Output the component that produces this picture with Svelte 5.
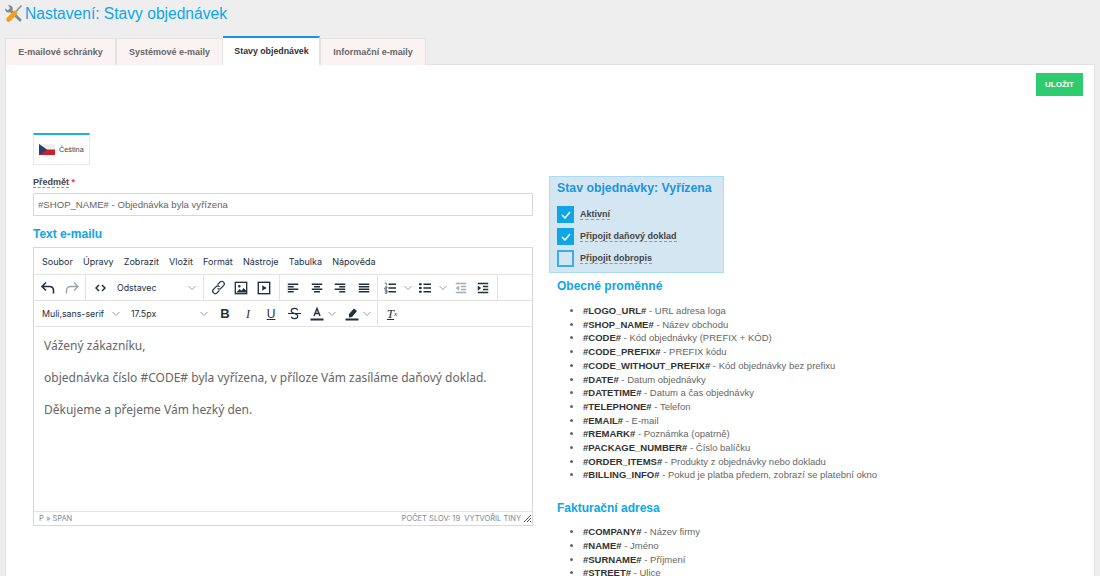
<script>
	const tabs = [
		{ label: 'E-mailové schránky', width: 111 },
		{ label: 'Systémové e-maily', width: 107 },
		{ label: 'Stavy objednávek', width: 97, active: true },
		{ label: 'Informační e-maily', width: 106 }
	];

	const menu = ['Soubor', 'Úpravy', 'Zobrazit', 'Vložit', 'Formát', 'Nástroje', 'Tabulka', 'Nápověda'];

	const general = [
		['#LOGO_URL#', 'URL adresa loga'],
		['#SHOP_NAME#', 'Název obchodu'],
		['#CODE#', 'Kód objednávky (PREFIX + KÓD)'],
		['#CODE_PREFIX#', 'PREFIX kódu'],
		['#CODE_WITHOUT_PREFIX#', 'Kód objednávky bez prefixu'],
		['#DATE#', 'Datum objednávky'],
		['#DATETIME#', 'Datum a čas objednávky'],
		['#TELEPHONE#', 'Telefon'],
		['#EMAIL#', 'E-mail'],
		['#REMARK#', 'Poznámka (opatrně)'],
		['#PACKAGE_NUMBER#', 'Číslo balíčku'],
		['#ORDER_ITEMS#', 'Produkty z objednávky nebo dokladu'],
		['#BILLING_INFO#', 'Pokud je platba předem, zobrazí se platební okno']
	];

	const billing = [
		['#COMPANY#', 'Název firmy'],
		['#NAME#', 'Jméno'],
		['#SURNAME#', 'Příjmení'],
		['#STREET#', 'Ulice']
	];

	const checks = [
		{ label: 'Aktivní', on: true },
		{ label: 'Připojit daňový doklad', on: true },
		{ label: 'Připojit dobropis', on: false }
	];
</script>

{#snippet chevron()}
	<svg class="chev" width="10" height="6" viewBox="0 0 10 6"><path d="M1.500 1l3.500 3.500L8.500 1" fill="none" stroke="#9a9a9a" stroke-width="1" /></svg>
{/snippet}

{#snippet lines(d, color = '#222f3e')}
	<svg class="ico" width="12" height="12" viewBox="0 0 16 16"><path {d} fill="none" stroke={color} stroke-width="1.800" /></svg>
{/snippet}

<div class="page">
	<h1>
		<svg width="20" height="20" viewBox="0 0 20 20">
			<path d="M6 6l10 10" stroke="#7f8c95" stroke-width="3" stroke-linecap="round" />
			<path d="M1.200 4.200l2.300 2 2-.4.500-2.100-2-2.300c2.500-.7 5 1 4.800 3.800L7.500 8 4.800 8.500C2.500 8.800.7 6.800 1.200 4.200z" fill="#7f8c95" />
			<path d="M17.500 1.500L11 8.500" stroke="#8b979f" stroke-width="1.800" />
			<path d="M11 9l-6.500 6.500" stroke="#f59e1c" stroke-width="4.600" stroke-linecap="round" />
		</svg>
		<span>Nastavení: Stavy objednávek</span>
	</h1>

	<nav class="tabs">
		{#each tabs as tab}
			<div class="tab" class:active={tab.active} style="width: {tab.width}px">{tab.label}</div>
		{/each}
	</nav>

	<main class="panel">
		<div class="actions"><button class="save">ULOŽIT</button></div>

		<div class="lang">
			<svg width="16" height="11" viewBox="0 0 16 11">
				<rect width="16" height="5.500" fill="#eee" />
				<rect y="5.500" width="16" height="5.500" fill="#c8202c" />
				<path d="M0 0l8 5.500L0 11z" fill="#23406f" />
			</svg>
			<span>Čeština</span>
		</div>

		<div class="columns">
			<section class="left">
				<label class="field-label" for="subject"><span class="dashed">Předmět</span> <em>*</em></label>
				<input id="subject" class="subject" value="#SHOP_NAME# - Objednávka byla vyřízena" />

				<h3 class="text-title">Text e-mailu</h3>

				<div class="editor">
					<div class="menubar">
						{#each menu as item}<span>{item}</span>{/each}
					</div>

					<div class="toolbar">
						<div class="group history">
							<span class="btn">
								<svg class="ico" width="16" height="16" viewBox="0 0 16 16"><path d="M6 2.500L2 6.500l4 4M2.500 6.500h7c2.500 0 4 1.700 4 4v3" fill="none" stroke="#222f3e" stroke-width="1.600" /></svg>
							</span>
							<span class="btn">
								<svg class="ico" width="16" height="16" viewBox="0 0 16 16"><path d="M10 2.500l4 4-4 4M13.500 6.500h-7c-2.500 0-4 1.700-4 4v3" fill="none" stroke="#9aa1a9" stroke-width="1.300" /></svg>
							</span>
						</div>
						<div class="group format">
							<span class="btn">
								<svg class="ico" width="11" height="8" viewBox="0 0 11 8"><path d="M4 1L1 4l3 3M7 1l3 3-3 3" fill="none" stroke="#222f3e" stroke-width="1.500" /></svg>
							</span>
							<span class="select para">Odstavec {@render chevron()}</span>
						</div>
						<div class="group media">
							<span class="btn">
								<svg class="ico" width="15" height="15" viewBox="0 0 16 16"><path d="M7 5l2.500-2.800c1-1 2.800-1 3.800 0s1.100 2.700.1 3.800L10.500 9c-1 1-2.600 1-3.500 0M9 11l-2.500 2.800c-1 1-2.800 1-3.800 0s-1.100-2.700-.1-3.800L5.500 7c1-1 2.600-1 3.500 0" fill="none" stroke="#222f3e" stroke-width="1.300" /></svg>
							</span>
							<span class="btn">
								<svg class="ico" width="14" height="14" viewBox="0 0 16 16"><rect x="1.500" y="1.500" width="13" height="13" fill="none" stroke="#222f3e" stroke-width="1.500" /><circle cx="6" cy="6" r="1.400" fill="#222f3e" /><path d="M2.500 13l4-4 2 2 2.500-3 3 3v2z" fill="#222f3e" /></svg>
							</span>
							<span class="btn">
								<svg class="ico" width="14" height="14" viewBox="0 0 16 16"><rect x="1.500" y="1.500" width="13" height="13" fill="none" stroke="#222f3e" stroke-width="1.600" /><path d="M6 4.800v6.400L11 8z" fill="#222f3e" /></svg>
							</span>
						</div>
						<div class="group align">
							<span class="btn">{@render lines('M1 3h14M1 6.300h8M1 9.700h14M1 13h8')}</span>
							<span class="btn">{@render lines('M1 3h14M4 6.300h8M1 9.700h14M4 13h8')}</span>
							<span class="btn">{@render lines('M1 3h14M7 6.300h8M1 9.700h14M7 13h8')}</span>
							<span class="btn">{@render lines('M1 3h14M1 6.300h14M1 9.700h14M1 13h14')}</span>
						</div>
						<div class="group lists">
							<span class="split wide">
								<svg class="ico" width="12" height="12" viewBox="0 0 16 16"><path d="M6 3h10M6 8h10M6 13h10" stroke="#222f3e" stroke-width="1.800" /><path d="M1 1.500h2v3M1 6.500h3v1.500H1v1.500h3M1 11h3v4H1M1 13h3" fill="none" stroke="#222f3e" stroke-width=".9" /></svg>
								{@render chevron()}
							</span>
							<span class="split wide">
								<svg class="ico" width="12" height="12" viewBox="0 0 16 16"><path d="M6 3h10M6 8h10M6 13h10" stroke="#222f3e" stroke-width="1.800" /><path d="M0 3h3.500M0 8h3.500M0 13h3.500" stroke="#222f3e" stroke-width="2.400" /></svg>
								{@render chevron()}
							</span>
							<span class="btn">
								<svg class="ico" width="12" height="12" viewBox="0 0 16 16"><path d="M1 2h14M8 6h7M8 10h7M1 14h14" stroke="#a5abb2" stroke-width="1.800" /><path d="M5.500 4.500L1 8l4.500 3.500z" fill="#a5abb2" /></svg>
							</span>
							<span class="btn">
								<svg class="ico" width="12" height="12" viewBox="0 0 16 16"><path d="M1 2h14M8 6h7M8 10h7M1 14h14" stroke="#222f3e" stroke-width="1.800" /><path d="M1 4.500L5.500 8 1 11.500z" fill="#222f3e" /></svg>
							</span>
						</div>
					</div>

					<div class="toolbar">
						<div class="group fonts">
							<span class="select family">Muli,sans-serif {@render chevron()}</span>
							<span class="select size">17.5px {@render chevron()}</span>
						</div>
						<div class="group marks">
							<span class="btn glyph bold">B</span>
							<span class="btn glyph italic">I</span>
							<span class="btn glyph under">U</span>
							<span class="btn">
								<svg class="ico" width="13" height="13" viewBox="0 0 14 14"><path d="M10.500 3.500C10 2 8.500 1.500 7 1.500c-2 0-3.500 1-3.500 2.600 0 1.700 1.500 2.300 3.500 2.900 2 .6 3.500 1.200 3.500 2.900 0 1.600-1.500 2.600-3.500 2.600-1.600 0-3-.6-3.500-2" fill="none" stroke="#222f3e" stroke-width="1.300" /><path d="M0 7h14" stroke="#222f3e" stroke-width="1.200" /></svg>
							</span>
							<span class="split">
								<svg class="ico" width="16" height="16" viewBox="0 0 16 16"><path d="M5 10l3-7.500L11 10M6 7.500h4" fill="none" stroke="#222f3e" stroke-width="1.400" /><rect x="1.500" y="12.500" width="13" height="2" fill="#222f3e" /></svg>
								{@render chevron()}
							</span>
							<span class="split">
								<svg class="ico" width="16" height="16" viewBox="0 0 16 16"><path d="M5 8l5-5.500 3 2.500-5 6-3 .5zM1.500 12.500h13v2h-13z" fill="#222f3e" /></svg>
								{@render chevron()}
							</span>
						</div>
						<div class="group last">
							<span class="btn glyph italic clear"><u>T</u><sub>x</sub></span>
						</div>
					</div>

					<div class="body">
						<p>Vážený zákazníku,</p>
						<p>objednávka číslo #CODE# byla vyřízena, v příloze Vám zasíláme daňový doklad.</p>
						<p>Děkujeme a přejeme Vám hezký den.</p>
					</div>

					<div class="status">
						<span>P » SPAN</span>
						<span class="right">POČET SLOV: 19 &nbsp;VYTVOŘIL TINY</span>
						<svg width="7" height="7" viewBox="0 0 7 7"><path d="M0 7l7-7M3 7l4-4M6 7l1-1" stroke="#555" stroke-width="1" /></svg>
					</div>
				</div>
			</section>

			<section class="right-col">
				<div class="state">
					<h3>Stav objednávky: Vyřízena</h3>
					{#each checks as check}
						<div class="check">
							<span class="box" class:on={check.on}>
								{#if check.on}
									<svg width="10" height="8" viewBox="0 0 10 8"><path d="M1 4l3 3 5-6" fill="none" stroke="#fff" stroke-width="1.500" /></svg>
								{/if}
							</span>
							<span class="dashed">{check.label}</span>
						</div>
					{/each}
				</div>

				<div class="vars">
					<h3>Obecné proměnné</h3>
					<ul>
						{#each general as [key, text]}
							<li><b>{key}</b> - {text}</li>
						{/each}
					</ul>

					<h3 class="second">Fakturační adresa</h3>
					<ul>
						{#each billing as [key, text]}
							<li><b>{key}</b> - {text}</li>
						{/each}
					</ul>
				</div>
			</section>
		</div>
	</main>
</div>

<style>
	:global(body) {
		margin: 0;
		background: #eeeeee;
		overflow: hidden;
	}

	.page {
		height: 576px;
		overflow: hidden;
		font-family: 'Liberation Sans', Arial, sans-serif;
		color: #555;
	}

	h1 {
		display: flex;
		align-items: flex-start;
		gap: 1px;
		margin: 0;
		padding: 4px 0 0 4px;
		height: 37px;
		box-sizing: border-box;
		font-size: 15.600px;
		font-weight: 400;
		line-height: 20px;
		color: #0ea5e9;
	}

	.tabs {
		display: flex;
		margin-left: 5px;
		height: 28px;
		align-items: flex-end;
		position: relative;
		z-index: 1;
	}

	.tab {
		box-sizing: border-box;
		height: 27px;
		background: #fbf3f3;
		border: 1px solid #e2e2e2;
		border-bottom: 0;
		font-size: 9px;
		font-weight: 700;
		line-height: 26px;
		text-align: center;
		color: #666;
	}

	.tab.active {
		height: 29px;
		background: #fff;
		border: 0;
		border-top: 2px solid #1b95e0;
		border-right: 1px solid #e2e2e2;
		padding-left: 1px;
		line-height: 27px;
		font-size: 8.800px;
		color: #333;
	}

	.panel {
		margin: -1px 5px 0 5px;
		border: 1px solid #e2e2e2;
		background: #fff;
		height: 520px;
		padding: 8px 11px 0 27px;
		box-sizing: border-box;
	}

	.actions {
		display: flex;
		justify-content: flex-end;
		height: 23px;
	}

	.save {
		width: 47px;
		height: 23px;
		border: 0;
		padding: 0;
		background: #2ecc71;
		color: #fff;
		font: 700 8px 'Liberation Sans', Arial, sans-serif;
	}

	.lang {
		display: flex;
		align-items: center;
		gap: 4px;
		box-sizing: border-box;
		width: 57px;
		height: 32px;
		margin-top: 37px;
		padding-left: 5px;
		border: 1px solid #e8e8e8;
		border-top: 2px solid #1ab0ec;
		font-size: 7.300px;
		color: #444;
	}

	.columns {
		display: flex;
		gap: 16px;
		margin-top: 11px;
	}

	.left {
		width: 500px;
		flex: none;
	}

	.field-label {
		display: block;
		font-size: 9px;
		font-weight: 700;
		line-height: 13px;
		color: #444;
	}

	.field-label em {
		color: #e33;
		font-style: normal;
	}

	.dashed {
		border-bottom: 1px dashed #33b5f0;
	}

	.subject {
		display: block;
		box-sizing: border-box;
		width: 100%;
		height: 23px;
		margin-top: 4px;
		padding: 0 4px;
		border: 1px solid #d8d8d8;
		outline: 0;
		font: 9.600px 'Liberation Sans', Arial, sans-serif;
		color: #666;
	}

	.text-title {
		margin: 11px 0 5px;
		font-size: 12px;
		line-height: 15px;
		font-weight: 700;
		color: #0ea5e9;
	}

	.editor {
		box-sizing: border-box;
		height: 279px;
		border: 1px solid #d8d8d8;
		display: flex;
		flex-direction: column;
		font-family: Inter, 'Liberation Sans', sans-serif;
		color: #222f3e;
	}

	.menubar {
		display: flex;
		gap: 10.200px;
		align-items: center;
		height: 27px;
		flex: none;
		padding-left: 8px;
		font-size: 9px;
		border-bottom: 1px solid #e3e3e3;
		box-sizing: border-box;
	}

	.toolbar {
		display: flex;
		height: 26px;
		flex: none;
		border-bottom: 1px solid #e3e3e3;
		box-sizing: border-box;
	}

	.group {
		display: flex;
		align-items: center;
		gap: 7.500px;
		padding: 0 6px;
		border-right: 1px solid #e3e3e3;
		box-sizing: border-box;
	}

	.history {
		width: 52px;
	}

	.format {
		width: 118px;
		gap: 9px;
	}

	.media {
		width: 76px;
		gap: 7px;
	}

	.align {
		width: 98px;
		padding-left: 5px;
	}

	.lists {
		width: 120px;
		gap: 5.500px;
	}

	.fonts {
		border-right: 0;
		width: 178px;
		padding: 0 3px 0 8px;
		gap: 10px;
	}

	.marks {
		width: 166px;
		gap: 7px;
		padding-left: 5px;
		padding-right: 0;
	}

	.last {
		border-right: 0;
	}

	.btn {
		display: flex;
		align-items: center;
		justify-content: center;
		width: 16px;
		flex: none;
	}

	.split {
		display: flex;
		align-items: center;
		gap: 2px;
		flex: none;
	}

	.split.wide {
		gap: 7px;
	}

	.select {
		display: flex;
		align-items: center;
		justify-content: space-between;
		font-size: 8.800px;
		flex: 1;
	}

	.family {
		flex: none;
		width: 79px;
	}

	.glyph {
		font-size: 12px;
		line-height: 16px;
		font-family: 'Liberation Sans', sans-serif;
		color: #222f3e;
	}

	.bold {
		font-weight: 700;
		font-size: 13px;
	}

	.italic {
		font-style: italic;
		font-family: 'Liberation Serif', serif;
	}

	.under {
		text-decoration: underline;
	}

	.clear {
		font-size: 13px;
	}

	.clear sub {
		font-size: 7px;
		line-height: 0;
	}

	.body {
		flex: 1;
		padding: 11px 10px 0;
		font-family: 'Noto Sans', 'Liberation Sans', sans-serif;
		font-size: 12px;
		line-height: 16px;
		color: #666;
	}

	.body p {
		margin: 0 0 16px;
	}

	.status {
		display: flex;
		align-items: center;
		gap: 3px;
		height: 13px;
		flex: none;
		padding: 0 1px 0 5px;
		border-top: 1px solid #e3e3e3;
		font-size: 7.500px;
		color: #7b8a96;
	}

	.status .right {
		margin-left: auto;
	}

	.right-col {
		width: 500px;
		flex: none;
	}

	.state {
		box-sizing: border-box;
		width: 175px;
		height: 97px;
		padding: 4px 7px;
		background: #d5e6f3;
		border: 1px solid #a8dcf5;
	}

	.state h3 {
		margin: 0 0 8px;
		font-size: 12.300px;
		line-height: 15px;
		font-weight: 700;
		color: #1b95e0;
	}

	.check {
		display: flex;
		align-items: center;
		gap: 6px;
		height: 21.700px;
		font-size: 9px;
		font-weight: 700;
		color: #444;
	}

	.box {
		display: flex;
		align-items: center;
		justify-content: center;
		box-sizing: border-box;
		width: 17px;
		height: 17px;
		border: 2px solid #3badec;
	}

	.box.on {
		background: #0ea5e9;
		border-color: #0ea5e9;
	}

	.vars {
		padding-left: 8px;
	}

	.vars h3 {
		margin: 6px 0 10px;
		font-size: 12px;
		line-height: 15px;
		font-weight: 700;
		color: #0ea5e9;
	}

	.vars h3.second {
		margin-top: 19px;
		margin-bottom: 9px;
	}

	ul {
		margin: 0;
		padding-left: 26px;
		font-size: 9.500px;
		line-height: 13.700px;
		color: #666;
	}

	b {
		color: #333;
	}
</style>
